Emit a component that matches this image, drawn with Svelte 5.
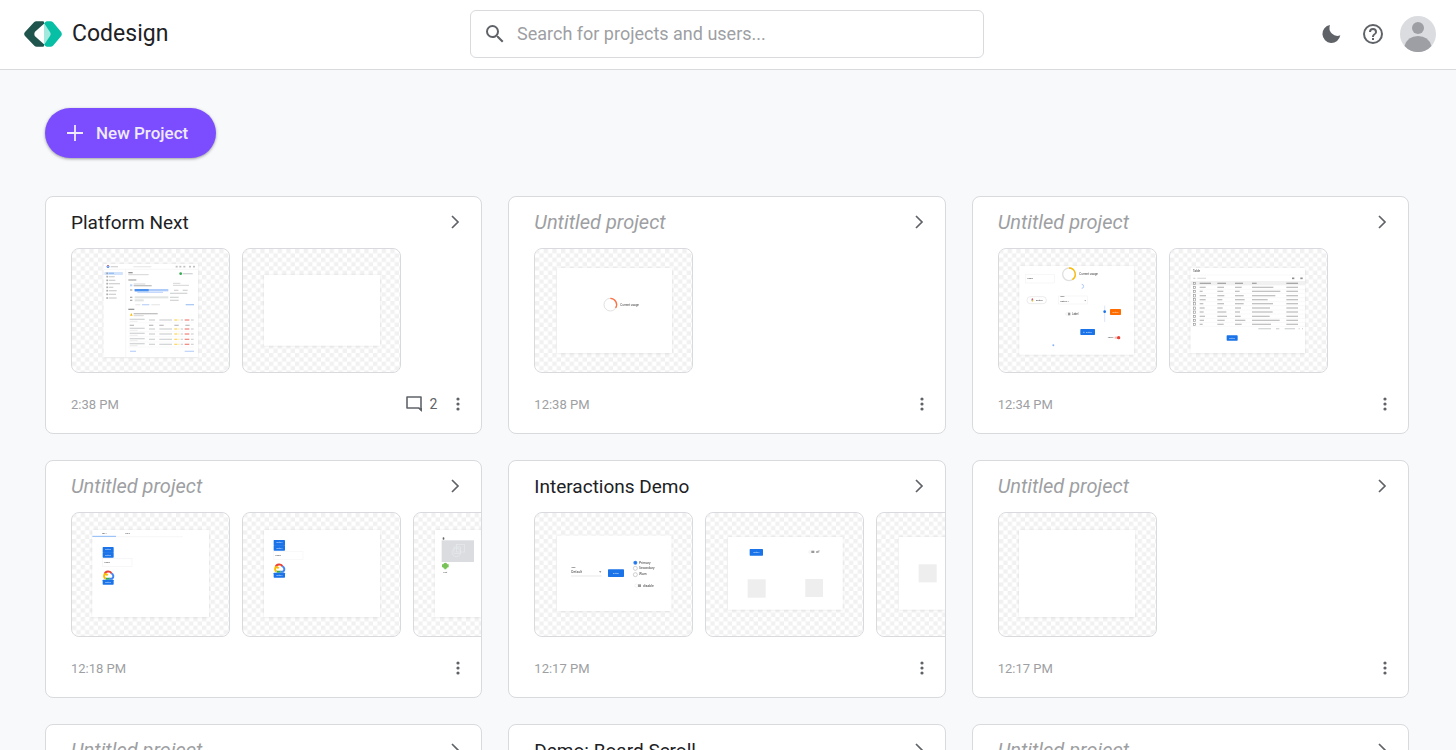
<script>
  const projects = [
    { title: 'Platform Next', time: '2:38 PM', comments: 2, boards: ['console', 'blank'] },
    { title: '', time: '12:38 PM', boards: ['usage'] },
    { title: '', time: '12:34 PM', boards: ['widgets', 'table'] },
    { title: '', time: '12:18 PM', boards: ['tabs', 'stack', 'media'] },
    { title: 'Interactions Demo', time: '12:17 PM', boards: ['form', 'toggle', 'square'] },
    { title: '', time: '12:17 PM', boards: ['empty'] },
    { title: '', time: '12:15 PM', boards: [] },
    { title: 'Demo: Board Scroll', time: '12:15 PM', boards: [] },
    { title: '', time: '12:14 PM', boards: [] }
  ];

  const navRows = [250, 260, 271, 281, 292, 302, 313, 324];
  const navWidths = [16, 18, 20, 34, 14, 24, 22, 24];
  const statusRows = [390, 417, 432, 448, 463];
  const tableRows = [292, 304, 317, 329, 341, 354, 366, 379, 391, 403];
  const nameWidths = [18, 9, 19, 18, 11, 15, 12, 16, 13, 9];
  const lastWidths = [20, 18, 21, 15, 20, 16, 27, 29, 22, 19];
  const companyWidths = [20, 14, 26, 29, 26, 18, 15, 17, 31, 20];
  const mailWidths = [64, 85, 70, 47, 63, 54, 62, 53, 83, 57];
</script>

{#snippet page(x, y, w, h)}
  <rect {x} {y} width={w} height={h} fill="#fff" filter="url(#sheet)" />
{/snippet}

{#snippet bar(x, y, w, fill = '#b8babd', h = 4)}
  <rect {x} y={y - h / 2} width={w} height={h} {fill} opacity=".6" />
{/snippet}

{#snippet button(x, y, w, h, fill = '#1a73e8', label = 'Button')}
  <rect {x} {y} width={w} height={h} rx="2" {fill} />
  <text x={x + w / 2} y={y + h / 2 + 2} font-size="6" fill="#fff" text-anchor="middle">{label}</text>
{/snippet}

{#snippet cloud(x, y)}
  <g transform="translate({x} {y})" fill="none" stroke-width="6">
    <path d="M5 11a11 10 0 0 1 21-2" stroke="#ea4335" />
    <path d="M25 8a9 9 0 0 1 2 16h-8" stroke="#4285f4" />
    <path d="M20 24h-12" stroke="#34a853" />
    <path d="M8 24a7 8 0 0 1-2-14q4-1 8 4" stroke="#fbbc04" />
  </g>
{/snippet}

{#snippet drawing(kind)}
  {#if kind === 'console'}
    <g transform="translate(-31 -58) scale(.33333)">
      {@render page(191, 222, 283, 279)}
      <path d="M191 238h283M257 238v263" stroke="#f1f1f1" stroke-width="2" />
      <circle cx="204" cy="230" r="3" fill="none" stroke="#4285f4" stroke-width="3" />
      <path d="M201 228q3-4 6 0" stroke="#ea4335" stroke-width="2" fill="none" />
      {@render bar(212, 230, 22)}
      {@render bar(280, 230, 54, '#ddd')}
      {#each [407, 418, 430, 447, 459] as x}{@render bar(x, 230, 6, '#999', 5)}{/each}
      <rect x="193" y="246" width="56" height="9" rx="3" fill="#d2e3fc" />
      {#each navRows as y, i}
        {@render bar(199, y, 5, '#777', 5)}
        {@render bar(206, y, navWidths[i], i ? '#b4b5b8' : '#75a7ec')}
      {/each}
      {@render bar(265, 248, 13, '#555')}
      {@render bar(265, 254, 61, '#bbb', 3)}
      <circle cx="422" cy="251" r="4" fill="#34a853" />
      {@render bar(428, 251, 30)}
      {@render bar(265, 270, 24, '#777')}
      {@render bar(270, 286, 7, '#8ab4f8', 6)}
      {@render bar(281, 282, 35, '#bbb', 3)}
      {@render bar(281, 287, 54, '#999')}
      {@render bar(399, 280, 22, '#bbb', 3)}
      {@render bar(399, 286, 48, '#bbb', 3)}
      {@render bar(270, 300, 7, '#777')}
      <rect x="284" y="297" width="101" height="7" fill="#aecbfa" />
      <rect x="284" y="297" width="42" height="7" fill="#4a90ee" />
      {@render bar(292, 307, 77, '#8ab4f8', 3)}
      {@render bar(402, 301, 13)}{@render bar(428, 301, 15)}
      {@render bar(390, 310, 52)}
      {@render bar(270, 322, 7, '#777')}{@render bar(284, 322, 101, '#ccced1', 6)}{@render bar(390, 322, 26)}
      {@render bar(270, 331, 7, '#777')}{@render bar(284, 331, 27, '#ccced1', 6)}{@render bar(390, 331, 26)}
      {@render bar(286, 344, 15, '#ddd')}{@render bar(306, 344, 22, '#9bbdf3')}{@render bar(334, 344, 26, '#ddd')}
      {@render bar(437, 344, 25, '#75a7ec')}
      {@render bar(265, 358, 18, '#555')}
      <path d="M270 377l4-8 4 8z" fill="#fbbc04" />
      {@render bar(281, 371, 72, '#999')}
      {@render bar(281, 377, 30, '#bbb', 3)}
      {#each [269, 327, 358, 403, 436] as x}{@render bar(x, 406, 13, '#999')}{/each}
      {#each statusRows as y}
        {@render bar(269, y - 2, 45)}{@render bar(269, y + 4, 24, '#ddd', 3)}
        {@render bar(327, y, 18)}{@render bar(358, y, 38)}
        {@render bar(403, y, 9, '#fbbc04')}{@render bar(414, y, 5, '#fde293')}{@render bar(422, y, 7)}
        {@render bar(434, y, 14, '#ea4335')}{@render bar(453, y, 8)}
        <path d="M265 {y + 8}h197" stroke="#f1f1f1" />
      {/each}
      {@render bar(270, 484, 18, '#9bbdf3')}{@render bar(434, 484, 28, '#9bbdf3')}
    </g>
  {:else if kind === 'blank'}
    <g transform="translate(-12 -58) scale(.33333)">{@render page(102, 255, 348, 212)}</g>
  {:else if kind === 'usage'}
    <g transform="translate(-34 -58) scale(.33333)">
      {@render page(171, 234, 345, 255)}
      <circle cx="331" cy="344" r="19" fill="none" stroke="#e0e0e0" stroke-width="3" />
      <path d="M331 325a19 19 0 0 1 16 29" fill="none" stroke="#ff7043" stroke-width="4" />
      <text x="361" y="347" font-size="9">Current usage</text>
    </g>
  {:else if kind === 'widgets'}
    <g transform="translate(-8 -48) scale(.33333)">
      {@render page(88, 198, 344, 266)}
      <circle cx="237" cy="223" r="19" fill="none" stroke="#e0e0e0" stroke-width="4" />
      <path d="M237 204a19 19 0 0 1 10 35" fill="none" stroke="#fbbc04" stroke-width="4" />
      <text x="268" y="226" font-size="9">Current usage</text>
      <rect x="106" y="223" width="88" height="26" fill="none" stroke="#f4f4f4" stroke-width="2" />
      <text x="112" y="238" font-size="7">Label</text>
      <path d="M275 253a6 6 0 0 1 0 12" fill="none" stroke="#8ab4f8" stroke-width="2" />
      <rect x="111" y="290" width="58" height="21" rx="10" fill="#fff" stroke="#e2e2e2" stroke-width="2" />
      <path d="M124 300h6" stroke="#4285f4" stroke-width="3" /><path d="M127 295v5" stroke="#ea4335" stroke-width="3" /><path d="M127 300v5" stroke="#fbbc04" stroke-width="3" />
      <text x="138" y="303" font-size="7">Button</text>
      <rect x="206" y="288" width="86" height="24" fill="none" stroke="#f4f4f4" stroke-width="2" />
      <text x="211" y="291" font-size="5">Label</text><text x="211" y="305" font-size="7">Option 1</text>
      <path d="M283 301h5l-2 3z" fill="#777" />
      <circle cx="231" cy="342" r="4" fill="#fff" stroke="#ddd" /><rect x="234" y="338" width="7" height="8" fill="#999" />
      <text x="246" y="345" font-size="8">Label</text>
      <path d="M344 317v49" stroke="#c6d8f4" stroke-width="2" /><circle cx="344" cy="335" r="4" fill="#1a73e8" />
      {@render button(360, 327, 33, 18, '#ff6d00')}
      {@render button(271, 387, 44, 18, '#1a73e8', '⊕ Button')}
      <text x="353" y="415" font-size="7">Label</text>
      {@render bar(374, 413, 12, '#f28b82', 6)}<circle cx="386" cy="413" r="5" fill="#ea4335" />
      <circle cx="190" cy="436" r="3" fill="#8ab4f8" />
    </g>
  {:else if kind === 'table'}
    <g transform="translate(-9 -58) scale(.33333)">
      {@render page(92, 234, 343, 255)}
      <text x="99" y="247" font-size="9">Table</text>
      <path d="M92 255h343" stroke="#eee" />
      {@render bar(100, 265, 6)}{@render bar(112, 265, 26, '#ccc')}
      {@render bar(396, 265, 7, '#444', 5)}{@render bar(421, 265, 7, '#444', 5)}
      <rect x="92" y="273" width="343" height="13" fill="#f1f1f2" />
      <rect x="100" y="277" width="7" height="7" fill="none" stroke="#999" stroke-width="2" />
      {@render bar(119, 280, 34, '#777')}{@render bar(172, 280, 26, '#777')}{@render bar(225, 280, 24, '#777')}{@render bar(276, 280, 14, '#777')}{@render bar(379, 280, 35, '#777')}
      {#each tableRows as y, i}
        <rect x="100" y={y - 3} width="7" height="7" fill="none" stroke="#999" stroke-width="2" />
        {@render bar(119, y, nameWidths[i], '#999')}{@render bar(172, y, lastWidths[i], '#999')}{@render bar(225, y, companyWidths[i], '#999')}{@render bar(276, y, mailWidths[i], '#999')}{@render bar(379, y, 35, '#999')}
        <path d="M92 {y + 6}h343" stroke="#ececec" />
      {/each}
      {@render bar(295, 416, 38)}{@render bar(348, 416, 10)}{@render bar(374, 416, 31)}{@render bar(416, 416, 3)}{@render bar(426, 416, 3)}
      {@render button(200, 436, 33, 16)}
    </g>
  {:else if kind === 'tabs'}
    <g transform="translate(-11 -52) scale(.33333)">
      {@render page(97, 210, 350, 261)}
      <path d="M97 230h272" stroke="#f3f3f3" stroke-width="2" /><path d="M97 229h71" stroke="#8ab9f8" stroke-width="3" />
      <text x="126" y="222" font-size="6">Tab 1</text><text x="196" y="222" font-size="6">Tab 2</text>
      {@render button(128, 261, 33, 17)}{@render button(128, 277, 33, 16)}
      <rect x="128" y="295" width="88" height="25" fill="none" stroke="#f4f4f4" stroke-width="2" />
      <text x="133" y="310" font-size="7">Label</text>
      {@render cloud(129, 332)}
      {@render button(128, 359, 33, 15)}
    </g>
  {:else if kind === 'stack'}
    <g transform="translate(-7 -52) scale(.33333)">
      {@render page(87, 210, 348, 261)}
      {@render button(116, 240, 34, 17)}{@render button(116, 256, 34, 16)}
      <rect x="116" y="274" width="88" height="25" fill="none" stroke="#f6f6f6" stroke-width="2" />
      <text x="121" y="289" font-size="7">Label</text>
      {@render cloud(117, 311)}
      {@render button(116, 338, 34, 15)}
    </g>
  {:else if kind === 'media'}
    <g transform="translate(-178 -52) scale(.33333)">
      {@render page(600, 210, 348, 261)}
      <rect x="623" y="232" width="5" height="7" rx="2" fill="#666" />
      <rect x="620" y="241" width="97" height="65" fill="#dadce0" />
      <g fill="none" stroke="#e8eaed" stroke-width="2"><rect x="665" y="253" width="23" height="23" /><rect x="657" y="261" width="20" height="20" /><circle cx="664" cy="277" r="13" /></g>
      <path d="M625 313q1-5 6-5t6 5h4v9h-4v3h-3v3h-6v-3h-3v-3h-4v-9z" fill="#78c257" />
      <text x="625" y="338" font-size="6">Text</text>
    </g>
  {:else if kind === 'form'}
    <g transform="translate(-9 -12) scale(.33333)">
      {@render page(96, 107, 343, 226)}
      <text x="139" y="205" font-size="6">label</text><text x="139" y="220" font-size="10">Default</text>
      <path d="M138 228h92" stroke="#bbb" /><path d="M222 214h7l-3 4z" fill="#777" />
      {@render button(249, 208, 48, 23)}
      <circle cx="331" cy="188" r="6" fill="#3b86f0" /><circle cx="331" cy="188" r="3" fill="#1a73e8" />
      <circle cx="331" cy="205" r="6" fill="none" stroke="#777" /><circle cx="331" cy="224" r="6" fill="none" stroke="#777" />
      <text x="342" y="191" font-size="10">Primary</text><text x="342" y="208" font-size="10">Secondary</text><text x="342" y="226" font-size="10">Warn</text>
      <circle cx="334" cy="257" r="5" fill="#fff" stroke="#ddd" /><rect x="339" y="253" width="9" height="8" fill="#999" />
      <text x="354" y="260" font-size="10">disable</text>
    </g>
  {:else if kind === 'toggle'}
    <g transform="translate(-5 -12) scale(.33333)">
      {@render page(84, 111, 344, 218)}
      {@render button(149, 147, 40, 20)}
      <circle cx="330" cy="156" r="4" fill="#fff" stroke="#ddd" /><rect x="334" y="152" width="9" height="7" fill="#999" />
      <text x="348" y="158" font-size="8">off</text>
      <rect x="143" y="238" width="54" height="55" fill="#eee" /><rect x="316" y="237" width="53" height="54" fill="#eee" />
    </g>
  {:else if kind === 'square'}
    <g transform="translate(-176 -12) scale(.33333)">
      {@render page(597, 111, 344, 218)}
      <rect x="656" y="193" width="54" height="54" fill="#eee" />
    </g>
  {:else}
    <g transform="scale(.33333)">{@render page(63, 54, 348, 261)}</g>
  {/if}
{/snippet}

<svg class="defs" aria-hidden="true">
  <defs>
    <pattern id="checks" width="8.667" height="8.667" patternUnits="userSpaceOnUse" x="1" y="1">
      <path d="M0 0h4.333v4.333h-4.333zM4.333 4.333h4.333v4.333h-4.333z" fill="#f1f1f1" />
    </pattern>
    <filter id="sheet" x="-10%" y="-20%" width="120%" height="140%">
      <feDropShadow dx="0" dy="1" stdDeviation="3" flood-color="#000" flood-opacity=".11" />
    </filter>
  </defs>
</svg>

<div class="shell">
  <header>
    <a class="brand" href="#home">
      <svg width="38" height="26" viewBox="71 64.500 114 77" aria-hidden="true">
        <path d="M108 65h20q3 0 3 3v4l-27 24q-4 7 0 14l27 24v4q0 3-3 3h-19q-4 0-7-3l-28-29q-5-6 0-12l27-29q3-3 7-3z" fill="#20554e" />
        <path d="M131 72l21 25q3 6 0 12l-21 25z" fill="#a3e9de" />
        <path d="M131 71l4-4q2-2 5-2h11q4 0 7 3l24 28q5 7 0 14l-24 28q-3 3-7 3h-11q-3 0-5-2l-4-4 18-26q4-6 0-12z" fill="#07bfa5" />
      </svg>
      <span>Codesign</span>
    </a>
    <label class="search">
      <svg width="24" height="24" viewBox="0 0 24 24" fill="#5f6368" aria-hidden="true"><path d="M15.500 14h-.79l-.28-.27A6.470 6.470 0 0 0 16 9.500 6.500 6.500 0 1 0 9.500 16c1.610 0 3.090-.59 4.230-1.570l.27.28v.79l5 4.990L20.490 19l-4.990-5zm-6 0a4.500 4.500 0 1 1 0-9 4.500 4.500 0 0 1 0 9z" /></svg>
      <input type="search" aria-label="Search" placeholder="Search for projects and users..." />
    </label>
    <div class="tools">
      <div class="actions">
        <button aria-label="Dark theme"><svg width="24" height="24" viewBox="0 0 24 24"><path d="M11 3a9 9 0 1 0 10.300 10.300A8 8 0 0 1 11 3z" fill="#5f6368" /></svg></button>
        <button aria-label="Help"><svg width="24" height="24" viewBox="0 0 24 24" fill="#5f6368"><path d="M11 18h2v-2h-2v2zm1-16a10 10 0 1 0 0 20 10 10 0 0 0 0-20zm0 18a8 8 0 1 1 0-16 8 8 0 0 1 0 16zm0-14a4 4 0 0 0-4 4h2a2 2 0 1 1 4 0c0 2-3 1.750-3 5h2c0-2.250 3-2.500 3-5a4 4 0 0 0-4-4z" /></svg></button>
      </div>
      <button class="avatar" aria-label="Account"><svg width="36" height="36" viewBox="0 0 36 36"><circle cx="18" cy="18" r="18" fill="#dadce0" /><circle cx="18" cy="12" r="6" fill="#9e9fa4" /><path d="M4.500 30q3-10 13.500-10t13.500 10a18 18 0 0 1-27 0z" fill="#9e9fa4" /></svg></button>
    </div>
  </header>

  <main>
    <button class="new">
      <svg width="16" height="16" viewBox="0 0 16 16" aria-hidden="true"><path d="M8 0v16M0 8h16" stroke="#f0eaff" stroke-width="1.800" /></svg>
      New Project
    </button>
    <div class="grid">
      {#each projects as project}
        <article>
          <div class="head">
            <h2 class:untitled={!project.title}>{project.title || 'Untitled project'}</h2>
            <button aria-label="Open project"><svg width="9" height="14" viewBox="0 0 9 14"><path d="M1 1l6 6-6 6" fill="none" stroke="#5f6368" stroke-width="1.700" /></svg></button>
          </div>
          <div class="boards">
            {#each project.boards as kind}
              <a class="board" href="#board" aria-label="Board">
                <svg viewBox="1 1 157 123" aria-hidden="true">
                  <rect width="159" height="125" fill="url(#checks)" />
                  {@render drawing(kind)}
                </svg>
              </a>
            {/each}
          </div>
          <div class="foot">
            <time>{project.time}</time>
            {#if project.comments}
              <button class="comments" aria-label="Comments"><svg width="16" height="16" viewBox="0 0 16 16"><path d="M1 1h14v13l-2-2H1z" fill="none" stroke="#5f6368" stroke-width="1.600" stroke-linejoin="round" /><path d="M12 12h4v4z" fill="#5f6368" /></svg>{project.comments}</button>
            {/if}
            <button aria-label="More options"><svg width="4" height="14" viewBox="0 0 4 14" fill="#5f6368"><circle cx="2" cy="2" r="1.600" /><circle cx="2" cy="7" r="1.600" /><circle cx="2" cy="12" r="1.600" /></svg></button>
          </div>
        </article>
      {/each}
    </div>
  </main>
</div>

<style>
  :global(body) {
    margin: 0;
    background: #f8f9fb;
  }
  .defs {
    position: absolute;
    width: 0;
    height: 0;
  }
  .shell {
    display: flex;
    flex-direction: column;
    height: 100vh;
    font-family: Roboto, sans-serif;
    color: #202124;
  }
  svg {
    display: block;
    flex: none;
  }
  svg text {
    font-family: Roboto, sans-serif;
    opacity: 0.8;
  }
  button {
    display: flex;
    align-items: center;
    padding: 0;
    border: 0;
    background: none;
    font: inherit;
    color: inherit;
    cursor: pointer;
  }
  header {
    display: grid;
    grid-template-columns: minmax(0, 1fr) minmax(0, 514px) minmax(0, 1fr);
    align-items: center;
    flex: none;
    box-sizing: border-box;
    height: 70px;
    padding: 0 20px 2px 18px;
    background: #fff;
    border-bottom: 1px solid #d8dade;
  }
  .brand {
    display: flex;
    align-items: center;
    gap: 10px;
    padding-left: 6px;
    font-size: 23px;
    color: inherit;
    text-decoration: none;
  }
  .search {
    display: flex;
    align-items: center;
    gap: 10px;
    box-sizing: border-box;
    height: 48px;
    padding: 0 12px;
    border: 1px solid #d8dade;
    border-radius: 6px;
  }
  .search input {
    flex: 1;
    min-width: 0;
    padding: 0 0 1px;
    border: 0;
    outline: 0;
    background: none;
    font: inherit;
    font-size: 18px;
  }
  .search input::placeholder {
    color: #9e9fa3;
  }
  .tools {
    display: flex;
    align-items: center;
    justify-content: flex-end;
    gap: 15px;
  }
  .actions {
    display: flex;
    gap: 18px;
  }
  main {
    flex: 1;
    min-height: 0;
    overflow-y: auto;
    scrollbar-width: none;
    padding: 38px 47px 38px 45px;
  }
  .new {
    gap: 13px;
    height: 50px;
    padding: 0 28px 0 22px;
    margin-bottom: 38px;
    border-radius: 25px;
    background: #7c4dff;
    box-shadow: 0 1px 3px rgba(60, 64, 67, 0.5);
    color: #f0eaff;
    font-size: 17px;
    font-weight: 500;
  }
  .grid {
    display: grid;
    grid-template-columns: repeat(3, minmax(0, 1fr));
    gap: 26px;
  }
  article {
    overflow: hidden;
    background: #fff;
    border: 1px solid #d8dade;
    border-radius: 8px;
  }
  .head {
    display: flex;
    align-items: center;
    justify-content: space-between;
    box-sizing: border-box;
    height: 51px;
    padding: 0 21px 1px 25px;
  }
  h2 {
    margin: 0;
    font-size: 19px;
    font-weight: 400;
  }
  .untitled {
    font-size: 20px;
    color: #9e9fa3;
    font-style: italic;
  }
  .boards {
    display: flex;
    gap: 12px;
    height: 125px;
    padding-left: 25px;
  }
  .board {
    flex: none;
    box-sizing: border-box;
    width: 159px;
    height: 125px;
    overflow: hidden;
    border: 1px solid #d8dade;
    border-radius: 8px;
  }
  .foot {
    display: flex;
    align-items: center;
    gap: 19px;
    height: 58px;
    padding: 2px 21px 0 25px;
  }
  time {
    margin-right: auto;
    padding-top: 1px;
    font-size: 13px;
    color: #9e9fa3;
  }
  .comments {
    gap: 7px;
    font-size: 14px;
    color: #5f6368;
  }
</style>
